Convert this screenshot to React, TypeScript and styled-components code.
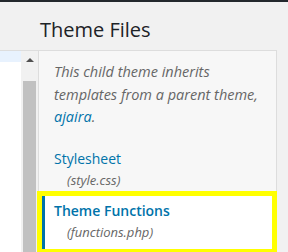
import React from "react";
import styled, { createGlobalStyle } from "styled-components";

const Global = createGlobalStyle`
  html, body { margin: 0; padding: 0; background: #f1f1f1; }
  body { font-family: "Open Sans", "Noto Sans", sans-serif; width: 288px; height: 252px; overflow: hidden; }
`;

const TopBar = styled.div`
  height: 2px;
  background: #23282d;
`;

const Main = styled.div`
  display: flex;
  align-items: flex-start;
`;

const Editor = styled.div`
  margin-top: 48px;
  width: 38px;
  height: 202px;
  display: flex;
  border-top: 1px solid #dddddd;
`;

const Code = styled.div`
  width: 21px;
  background: #ffffff;
`;

const ActiveLine = styled.div`
  height: 11px;
  background: #e8f2fe;
`;

const Scrollbar = styled.div`
  width: 17px;
  background: #f1f1f1;
  display: flex;
  flex-direction: column;
  align-items: center;
`;

const Arrow = styled.div`
  margin-top: 7px;
  width: 0;
  height: 0;
  border-left: 4px solid transparent;
  border-right: 4px solid transparent;
  border-bottom: 4px solid #505050;
`;

const Thumb = styled.div`
  margin-top: 19px;
  width: 13px;
  flex: 1;
  background: #c1c1c1;
`;

const Sidebar = styled.div`
  width: 239px;
`;

const Heading = styled.h2`
  margin: 0;
  height: 48px;
  box-sizing: border-box;
  padding: 15px 0 0 2px;
  font-size: 20px;
  line-height: 26px;
  font-weight: 400;
  color: #1d2327;
`;

const Panel = styled.div`
  background: #f7f7f7;
  border: 1px solid #dddddd;
  height: 210px;
  box-sizing: border-box;
`;

const Description = styled.p`
  margin: 0;
  padding: 10px 8px 0 15px;
  font-size: 14.5px;
  line-height: 22.5px;
  font-style: italic;
  color: #666666;
`;

const Link = styled.span`
  color: #0073aa;
`;

const FileList = styled.ul`
  list-style: none;
  margin: 17px 0 0 0;
  padding: 0;
`;

const FileItem = styled.li<{ $active?: boolean }>`
  box-sizing: border-box;
  padding: 3px 0 0 15px;
  ${(p) =>
    p.$active
      ? `
    margin: 0 -1px 0 -2px;
    border: 5px solid #ffff00;
    background: #ffffff;
    box-shadow: inset 3px 0 0 #0073aa;
    padding: 5px 0 6px 12px;
  `
      : ""}
`;

const FileName = styled.div<{ $active?: boolean }>`
  font-size: 14px;
  line-height: 20px;
  color: #0073aa;
  font-weight: ${(p) => (p.$active ? 600 : 400)};
`;

const FilePath = styled.div`
  padding-left: 13px;
  font-size: 13px;
  line-height: 22px;
  font-style: italic;
  color: #666666;
`;

export default function App() {
  return (
    <>
      <Global />
      <TopBar />
      <Main>
        <Editor>
          <Code>
            <ActiveLine />
          </Code>
          <Scrollbar>
            <Arrow />
            <Thumb />
          </Scrollbar>
        </Editor>
        <Sidebar>
          <Heading>Theme Files</Heading>
          <Panel>
            <Description>
              This child theme inherits templates from a parent theme, <Link>ajaira</Link>.
            </Description>
            <FileList>
              <FileItem>
                <FileName>Stylesheet</FileName>
                <FilePath>(style.css)</FilePath>
              </FileItem>
              <FileItem $active>
                <FileName $active>Theme Functions</FileName>
                <FilePath>(functions.php)</FilePath>
              </FileItem>
            </FileList>
          </Panel>
        </Sidebar>
      </Main>
    </>
  );
}
